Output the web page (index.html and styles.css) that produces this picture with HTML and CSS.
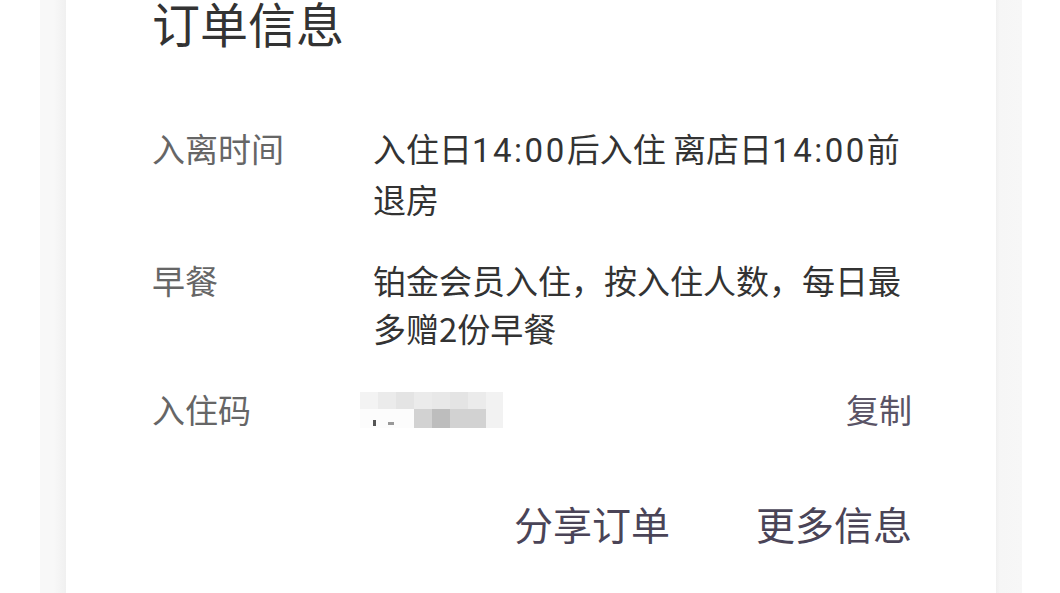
FILE: index.html
```html
<!DOCTYPE html>
<html lang="zh-CN">
<head>
<meta charset="utf-8">
<title>订单信息</title>
<link rel="stylesheet" href="styles.css">
</head>
<body>
<div class="frame">
  <div class="card">
    <h1 class="title">订单信息</h1>
    <div class="info">
      <div class="label">入离时间</div>
      <div class="value">入住日<span class="time">14:00</span>后入住 离店日<span class="time">14:00</span>前退房</div>
      <div class="label">早餐</div>
      <div class="value">铂金会员入住，按入住人数，每日最多赠2份早餐</div>
      <div class="label">入住码</div>
      <div class="value code-row">
        <div class="mosaic" aria-label="入住码已隐藏">
          <span class="m m1"></span><span class="m m2"></span><span class="m m3"></span><span class="m m2"></span><span class="m m4"></span><span class="m m3"></span><span class="m m2"></span><span class="m m5"></span>
          <span class="m m0"><i class="speck"></i></span><span class="m m0"><i class="speck s2"></i></span><span class="m m0"></span><span class="m m6"></span><span class="m m7"></span><span class="m m6"></span><span class="m m6"></span><span class="m m5"></span>
        </div>
        <span class="copy">复制</span>
      </div>
    </div>
    <div class="actions">
      <span class="action">分享订单</span>
      <span class="action">更多信息</span>
    </div>
  </div>
</div>
</body>
</html>
```
FILE: styles.css
```css
html, body {
  margin: 0;
  padding: 0;
  background: #ffffff;
  height: 100%;
  overflow: hidden;
}
body {
  font-family: "Noto Sans CJK SC", "Noto Sans", sans-serif;
}
.frame {
  margin: 0 38px 0 40px;
  height: 100%;
  padding: 0 26px;
  background: linear-gradient(to right, #f8f8f8 0, #f8f8f8 14px, #f0f0f0 26px, #f0f0f0 calc(100% - 26px), #f6f6f6 calc(100% - 22px), #f7f7f7 100%);
  box-sizing: border-box;
}
.card {
  background: #ffffff;
  height: 100%;
  padding: 0 84px 0 86px;
  box-sizing: border-box;
}
.title {
  margin: 0;
  font-size: 48px;
  line-height: 44px;
  font-weight: 400;
  color: #333333;
}
.info {
  margin-top: 80px;
  display: grid;
  grid-template-columns: 221px 1fr;
  row-gap: 33px;
  font-size: 33px;
  line-height: 48px;
}
.label {
  color: #666666;
}
.value {
  color: #333333;
}
.time {
  font-family: Roboto, "Noto Sans CJK SC", sans-serif;
  letter-spacing: 2.5px;
}
.code-row {
  display: flex;
  justify-content: space-between;
  align-items: center;
  margin-left: -13px;
}
.mosaic {
  display: grid;
  grid-template-columns: 18px 18px 18px 18px 18px 18px 18px 17px;
  grid-template-rows: 17px 19px;
  margin-top: 2px;
}
.m {
  display: block;
  position: relative;
}
.m0 { background: #fcfcfc; }
.m1 { background: #f3f3f3; }
.m2 { background: #ebebeb; }
.m3 { background: #e4e4e4; }
.m4 { background: #e8e8e8; }
.m5 { background: #f2f2f2; }
.m6 { background: #d2d2d2; }
.m7 { background: #bdbdbd; }
.speck {
  position: absolute;
  left: 13px;
  top: 11px;
  width: 3px;
  height: 6px;
  background: #555;
}
.speck.s2 {
  left: 10px;
  top: 13px;
  width: 6px;
  height: 3px;
  background: #999;
}
.copy {
  color: #5a5466;
}
.actions {
  margin-top: 66px;
  display: flex;
  justify-content: flex-end;
  gap: 86px;
  font-size: 39px;
  line-height: 48px;
  color: #4a4457;
}
```
